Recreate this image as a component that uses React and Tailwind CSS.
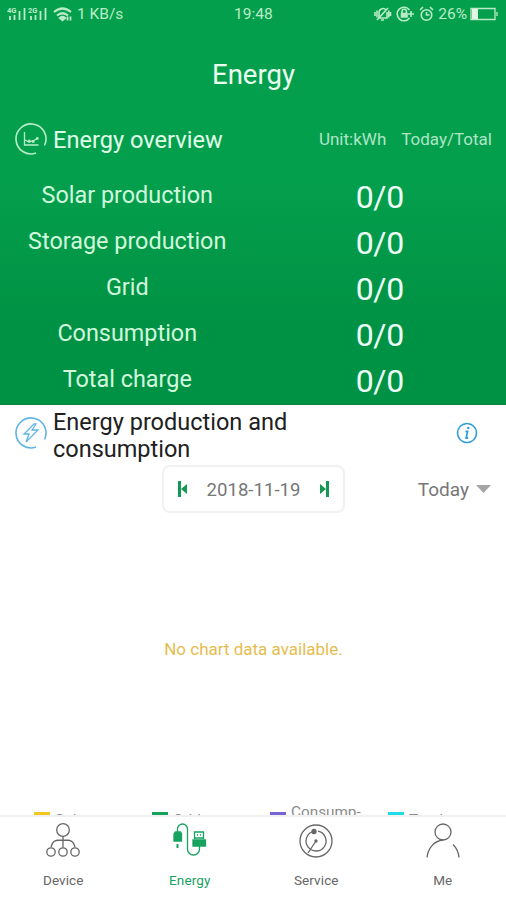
const rows = ["Solar production", "Storage production", "Grid", "Consumption", "Total charge"];

function Ring({ children, color }) {
  return (
    <svg className="w-8 h-8 shrink-0" viewBox="0 0 32 32" fill="none" stroke={color} strokeWidth="1.3">
      <path strokeWidth="1.6" d="M21 30.100A15 15 0 1 1 29.500 22.500" />
      {children}
    </svg>
  );
}

function Signal({ label }) {
  return (
    <svg className="w-[21px] h-4" viewBox="0 0 21 16" stroke="#b9ecc6" strokeWidth="1.8">
      <text x="0" y="7" fontSize="7.500" fontWeight="700" fill="#b9ecc6" stroke="none">{label}</text>
      <path d="M3 14V10M7.500 14V9M12.500 14V5M17.500 14V2" />
    </svg>
  );
}

function StatusBar() {
  return (
    <div className="relative h-7 flex items-center justify-between pl-[7px] pr-[7px] text-[15px] text-[#b9ecc6]">
      <div className="flex items-center">
        <Signal label="4G" />
        <Signal label="2G" />
        <svg className="w-5 h-4 ml-[4px]" viewBox="0 0 20 16" fill="none" stroke="#b9ecc6" strokeWidth="2.2">
          <path d="M1 6Q9.500 -1 18 6M4 9.500Q9.500 5 15 9.500" />
          <path d="M7 12Q9.500 10 12 12L9.500 14Z" fill="#b9ecc6" />
          <path d="M14.500 10.500v4M17.500 10.500v4" strokeWidth="1.800" />
        </svg>
        <span className="ml-[4px] pt-[2px] w-[47px] whitespace-nowrap text-[15.500px]">1 KB/s</span>
      </div>
      <span className="absolute left-[234px] pt-[2px] text-[15.500px]">19:48</span>
      <div className="flex items-center">
        <svg className="w-[62px] h-4" viewBox="0 0 62 16" fill="none" stroke="#b9ecc6" strokeWidth="1.6">
          <path d="M5 12V7a4 4 0 0 1 7-3M13 6v6H4M3 14L14 2M1 6v4M3 4.500v7M16.500 6v4M14.800 4.500v7M7 14h3" />
          <path d="M35.500 4a6.800 6.800 0 1 0 0 8M34 8h6M37 5v6" />
          <path d="M28 7V5.500a2.200 2.200 0 0 1 4.400 0V7" />
          <path d="M27.500 7.500h5.500v3.500h-5.500z" fill="#b9ecc6" />
          <circle cx="52.500" cy="9" r="5.300" />
          <path d="M52.500 6v3h3M46 4l3-3M59 4l-3-3" />
        </svg>
        <span className="ml-[2px] pt-[2px] text-[15.500px]">26%</span>
        <svg className="w-[29px] h-4 ml-[3px]" viewBox="0 0 29 16" fill="none" stroke="#b9ecc6" strokeWidth="1.3">
          <path d="M1 2.500h24v11H1zM27 6v4" />
          <path d="M2 3h6v10H2z" fill="#e2f8e5" stroke="none" />
        </svg>
      </div>
    </div>
  );
}

function Overview() {
  return (
    <section className="h-[405px] shrink-0 bg-linear-to-b from-[#049f4d] from-45% to-[#009244] to-80% border-b border-[#078239]">
      <StatusBar />
      <h1 className="h-[94px] pl-[1px] flex items-center justify-center text-[27.500px] text-[#ebfff0]">Energy</h1>
      <div className="-mt-[1px] h-[36px] flex items-center pl-[15px] pr-[14px]">
        <Ring color="#b9edc9">
          <path d="M9.500 9v13h14M10 17l4 2 4-1 5-3" />
          <path d="M13 18h2.500M17 18.500h2.500M21 15.500h2.500" strokeWidth="2.500" />
        </Ring>
        <h2 className="ml-[6px] pt-[3px] text-[23.600px] text-[#e0ffe9] whitespace-nowrap">Energy overview</h2>
        <span className="ml-auto pt-[2px] text-[17px] text-[#afe5c5] whitespace-nowrap">Unit:kWh</span>
        <span className="ml-[15px] pt-[2px] text-[17px] text-[#afe5c5] whitespace-nowrap">Today/Total</span>
      </div>
      <div className="mt-[15px] pl-[1px]">
        {rows.map((row) => (
          <div key={row} className="h-[46px] grid grid-cols-2 text-center leading-[46px]">
            <span className="text-[23.400px] text-[#d2f9dd]">{row}</span>
            <span className="text-[32px] tracking-[-0.4px] text-[#ecfff7] pt-[2px]">0/0</span>
          </div>
        ))}
      </div>
    </section>
  );
}

function Production() {
  return (
    <section className="h-[410px] shrink-0 overflow-hidden">
      <div className="h-[60px] flex items-start pl-[15px] pr-[28px]">
        <div className="mt-[12px]">
          <Ring color="#60b4e6">
            <path d="M19 7L9 17h5l-3 8 12-12h-6l4-6z" />
          </Ring>
        </div>
        <h2 className="ml-[6px] mt-[4px] w-[280px] text-[23.500px] leading-[27px] text-[#202020]">Energy production and consumption</h2>
        <svg className="ml-auto mt-[17px] w-[22px] h-[22px]" viewBox="0 0 22 22" fill="none" stroke="#2b9edb" strokeWidth="1.6">
          <circle cx="11" cy="11" r="9.500" />
          <path d="M12.500 5L12 7" strokeWidth="2.300" />
          <path d="M9.500 9.300h2L10.200 16h2" strokeWidth="1.800" />
        </svg>
      </div>
      <div className="h-[48px] flex items-center pl-[162px] pr-[15px]">
        <div className="w-[183px] h-[48px] border-2 border-[#f1f1f1] rounded-lg flex items-center justify-between px-[14px]">
          <svg className="w-[10px] h-[16px]" viewBox="0 0 10 16" fill="#149954">
            <path d="M0 0h3v16H0zM9 3v10L3 8z" />
          </svg>
          <span className="pt-[3px] text-[18.600px] text-[#777]">2018-11-19</span>
          <svg className="w-[10px] h-[16px]" viewBox="0 0 10 16" fill="#149954">
            <path d="M7 0h3v16H7zM1 3v10l6-5z" />
          </svg>
        </div>
        <span className="ml-auto pt-[2px] text-[19px] text-[#777]">Today</span>
        <svg className="ml-[7px] w-[15px] h-[8px]" viewBox="0 0 15 8" fill="#a5a5a5"><path d="M0 0h15L7.500 8z" /></svg>
      </div>
      <div className="h-[272px] pt-[1px] pl-[1px] flex items-center justify-center text-[17px] text-[#e5bd4f]">No chart data available.</div>
      <div className="mt-[17px] h-[13px] grid grid-cols-[118px_118px_118px_118px] pl-[34px] text-[15.300px] leading-[20px] text-[#8b8b8b]">
        <Legend color="bg-[#f1c821]" label="Solar" low />
        <Legend color="bg-[#13a35d]" label="Grid" low />
        <Legend color="bg-[#7765d5]" label="Consump-" />
        <Legend color="bg-[#20dce5]" label="Total" low />
      </div>
    </section>
  );
}

function Legend({ color, label, low }) {
  return (
    <div className="flex gap-[5px]">
      <i className={`${color} mt-[10px] h-[3px] w-[16px] shrink-0`} />
      <span className={low ? "pt-[8px]" : ""}>{label}</span>
    </div>
  );
}

const tabs = [
  {
    label: "Device",
    icon: (
      <>
        <circle cx="20" cy="9" r="6.300" /><path d="M20 15.500v11M8 26c2-7 5-7 12-7s10 0 12 7" />
        <circle cx="8" cy="31" r="4.200" /><circle cx="20" cy="31" r="4.200" /><circle cx="32" cy="31" r="4.200" />
      </>
    ),
  },
  {
    label: "Energy",
    active: true,
    icon: (
      <>
        <path d="M7.500 12V8a5 5 0 0 1 10 0v20a6 6 0 0 0 12 0v-4" />
        <path d="M4 13l1.500-2h5l1 2v7H4z" fill="currentColor" /><path d="M7.500 23v4" strokeWidth="2" />
        <path d="M23 19h12.500v6H23z" fill="currentColor" /><path d="M24.500 18v-7h9v7M27 14h1M30 14h1M24 17h10" />
      </>
    ),
  },
  {
    label: "Service",
    icon: (
      <>
        <circle cx="20" cy="20" r="16" /><path d="M17 10.500a10 10 0 1 0 5-.3M20 20l-8 12" />
        <circle cx="18" cy="10.500" r="2" fill="currentColor" /><circle cx="20" cy="20" r="1" fill="currentColor" />
      </>
    ),
  },
  {
    label: "Me",
    icon: <><circle cx="20" cy="11" r="8" /><path d="M20 19C11 20 5 27 4 36.500M30 23.500c3 3 5.500 7 6 13" /></>,
  },
];

export default function App() {
  return (
    <main className="w-[506px] h-[900px] overflow-hidden flex flex-col bg-white font-['Roboto',sans-serif]">
      <Overview />
      <Production />
      <nav className="h-[85px] shrink-0 grid grid-cols-4 border-t-2 border-[#f0f0f0]">
        {tabs.map(({ label, active, icon }) => (
          <div key={label} className={`flex flex-col items-center ${active ? "text-[#18a260]" : "text-[#666]"}`}>
            <svg className="mt-[4px] w-10 h-10" viewBox="0 0 40 40" fill="none" stroke="currentColor" strokeWidth="1.3">{icon}</svg>
            <span className="mt-[9px] text-[13.500px] leading-5 tracking-[0.1px]">{label}</span>
          </div>
        ))}
      </nav>
    </main>
  );
}
